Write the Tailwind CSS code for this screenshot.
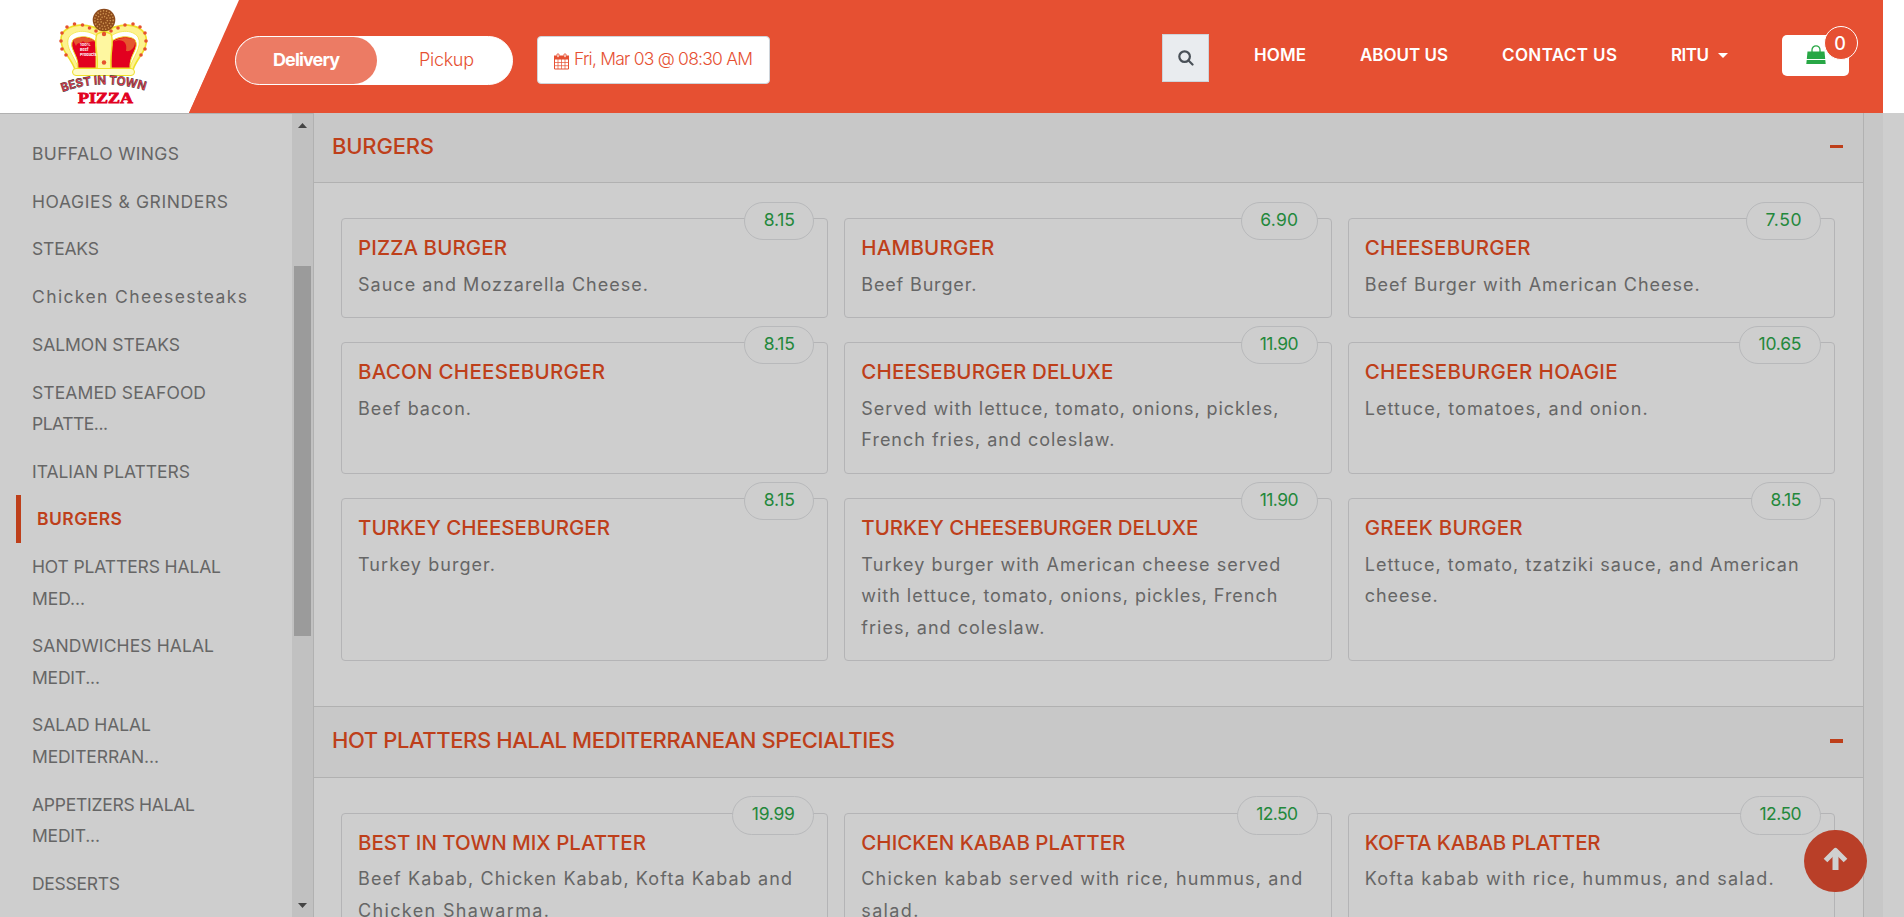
<!DOCTYPE html>
<html lang="en">
<head>
<meta charset="utf-8">
<title>Best In Town Pizza</title>
<script src="https://cdn.jsdelivr.net/npm/@tailwindcss/browser@4"></script>
</head>
<body class="h-[917px] w-[1904px] overflow-hidden bg-[#cecece] font-['Inter','Liberation_Sans',sans-serif] text-[#666]">
<header class="flex h-[113px] w-full bg-white">
  <div class="relative h-[113px] w-[189px] shrink-0">
    <svg class="absolute left-0 top-0" width="240" height="113" viewBox="0 0 240 113">
      <path d="M240 0L189 113H240Z" fill="#e65032"/>
      <g>
        <path d="M75 70C72 58 57 48 62 34C69 23 88 22 104 32C120 22 138 23 145 34C151 48 136 58 133 70Z" fill="#fdf28e" stroke="#efe02a" stroke-width="1.6"/>
        <path d="M78 68C76 58 64 47 69 37C75 29 90 30 98 37V68ZM130 68C132 58 143 47 138 37C132 29 118 30 110 37V68Z" fill="#fff" stroke="#f3e640" stroke-width=".8"/>
        <path d="M78 68C79 55 68 48 73 40C79 35 91 36 96 42V68ZM111 68V42C117 36 130 35 135 40C140 48 129 55 130 68Z" fill="#e2001f" stroke="#efe02a"/>
        <path d="M73 40C79 36 91 37 96 42C90 39 87 46 83 41C80 45 78 41 76 46ZM135 40C130 37 118 37 113 42C121 38 128 41 126 51C130 52 136 48 135 40Z" fill="#e5572f"/>
        <path d="M97 69C99 55 93 42 97 34Q104 30 111 34C115 42 109 55 111 69Z" fill="#fef7a0" stroke="#efe02a" stroke-width="1.4"/>
        <rect x="72.500" y="68.500" width="62" height="7" rx="3.500" fill="#fffbc8" stroke="#efe02a"/>
        <g fill="#e5512e"><circle cx="67" cy="27" r="1.800"/><circle cx="74.500" cy="24" r="1.800"/><circle cx="82.500" cy="25" r="1.800"/><circle cx="89.500" cy="28" r="1.800"/><circle cx="96" cy="31" r="1.800"/><circle cx="104" cy="34" r="2.200"/><circle cx="111" cy="31" r="1.800"/><circle cx="118" cy="28" r="1.800"/><circle cx="125" cy="25" r="1.800"/><circle cx="133" cy="24" r="1.800"/><circle cx="140" cy="27" r="1.800"/><circle cx="62" cy="33" r="1.800"/><circle cx="145" cy="33" r="1.800"/><circle cx="61" cy="41" r="1.800"/><circle cx="146" cy="41" r="1.800"/><circle cx="62" cy="49" r="1.800"/><circle cx="145" cy="49" r="1.800"/><circle cx="66" cy="55" r="1.800"/><circle cx="141" cy="55" r="1.800"/><circle cx="104" cy="62.500" r="2.200"/></g>
        <circle cx="104" cy="20" r="11.300" fill="#8c4a1c"/>
        <circle cx="104" cy="20" r="9.200" fill="none" stroke="#cf9450" stroke-width="1.500" stroke-dasharray="1.300 1.700"/>
        <circle cx="104" cy="20" r="6.400" fill="none" stroke="#cf9450" stroke-width="1.500" stroke-dasharray="1.300 1.500"/>
        <circle cx="104" cy="20" r="3.400" fill="none" stroke="#cf9450" stroke-width="1.500" stroke-dasharray="1.200 1.400"/>
        <g fill="#fff" font-family="Inter" font-weight="700" font-size="3.800"><text x="80" y="46">100%</text><text x="80" y="51">Beef</text><text x="80" y="55.500">Products</text></g>
        <path id="arc" d="M62.500 92Q104 77 146 91" fill="none"/>
        <text font-family="Inter" font-weight="700" font-size="12" fill="#e8384a" stroke="#333" stroke-width=".5"><textPath href="#arc" textLength="84" lengthAdjust="spacingAndGlyphs">BEST IN TOWN</textPath></text>
        <text x="78" y="102.500" textLength="55" lengthAdjust="spacingAndGlyphs" font-family="Liberation Serif" font-weight="700" font-size="15.500" fill="#e2001f" stroke="#e2001f" stroke-width=".8">PIZZA</text>
      </g>
    </svg>
  </div>
  <div class="flex w-[1694px] whitespace-nowrap bg-[#e65032] pl-[46px] [clip-path:polygon(50px_0,100%_0,100%_100%,0_100%)]">
    <div class="mt-9 flex h-[49px] w-[278px] shrink-0 rounded-full border border-white bg-white text-[18px]">
      <div class="flex w-[141px] items-center justify-center rounded-full bg-[#ec7b64] pb-0.5 font-bold text-white"><span data-w="66">Delivery</span></div>
      <div class="flex flex-1 items-center justify-center pb-0.5 pl-1 font-light text-[#e65032]"><span data-w="54">Pickup</span></div>
    </div>
    <div class="ml-6 mt-9 flex h-12 w-[233px] shrink-0 items-center rounded border border-[#ced4da] bg-white pl-4 text-[17.500px] font-light text-[#e65032]">
      <svg class="mr-[5px] mt-0.5 shrink-0" width="15" height="17" viewBox="0 0 15 17"><path d="M.5 3.500H14.500V16H.5Z" fill="#fff" stroke="#e65032"/><path d="M0 2.500H15V6.500H0Z" fill="#e65032"/><path d="M4 6V16M7.500 6V16M11 6V16M.5 9.500H14.500M.5 12.700H14.500" stroke="#e65032" stroke-width=".7"/><path d="M3 1H5V4.500H3ZM10 1H12V4.500H10Z" fill="#fff" stroke="#e65032" stroke-width=".8"/></svg>
      <span class="pb-0.5" data-w="178">Fri, Mar 03 @ 08:30 AM</span>
    </div>
    <div class="ml-[392px] mt-[34px] flex h-12 w-[47px] shrink-0 items-center justify-center border border-[#ced4da] bg-[#e9ecef]">
      <svg width="16" height="16" viewBox="0 0 16 16" fill="none" stroke="#495057" stroke-width="2.200"><circle cx="6.600" cy="6.600" r="5.300"/><path d="M10.500 10.500L14.500 14.500" stroke-linecap="round"/></svg>
    </div>
    <nav class="flex h-[111px] w-[573px] shrink-0 items-center pl-[45px] text-[17px] font-semibold text-white">
      <span class="w-[106px]"><span data-w="51">HOME</span></span>
      <span class="w-[142px]"><span data-w="87">ABOUT US</span></span>
      <span class="w-[169px]"><span data-w="114">CONTACT US</span></span>
      <span class="w-[47px]"><span data-w="37">RITU</span></span>
      <svg width="10" height="5"><path d="M0 0H10L5 5Z" fill="#fff"/></svg>
    </nav>
    <div class="relative mt-[35px] h-[41px] w-[67px] shrink-0 rounded-[5px] bg-white">
      <svg class="ml-6 mt-[10px]" width="20" height="19" viewBox="0 0 20 19"><path d="M1.500 6.500H18.500L19.200 14H.8Z M.7 15H19.300L19.700 19H.3Z" fill="#28a745"/><path d="M6 8.500V5A4 4.200 0 0 1 14 5V8.500" fill="none" stroke="#28a745" stroke-width="1.300"/></svg>
      <div class="absolute -top-[9px] left-[42px] flex size-[34px] items-center justify-center rounded-full border border-white bg-[#e65032] pr-0.5 text-[18px] font-medium text-white">0</div>
    </div>
  </div>
</header>
<div class="flex h-[804px]">
  <aside class="flex w-[314px] shrink-0 overflow-hidden border-r border-t border-[#b1b1b1]">
    <ul id="menu" class="w-[292px] pt-4 text-[17.500px] leading-[31.500px]"></ul>
    <div class="flex w-[21px] flex-col items-center bg-[#c1c1c1]">
      <svg class="mt-[9px]" width="9" height="5"><path d="M0 5L4.500 0L9 5Z" fill="#444"/></svg>
      <div class="mt-[138px] h-[370px] w-[17px] bg-[#9b9b9b]"></div>
      <svg class="mt-[267px]" width="9" height="5"><path d="M0 0L4.500 5L9 0Z" fill="#444"/></svg>
    </div>
  </aside>
  <main id="sections" class="h-[804px] w-[1550px] overflow-hidden border-r border-[#b1b1b1]"></main>
  <div class="w-[19px] bg-[#c7c7c7]"></div>
</div>
<button class="absolute left-[1804px] top-[830px] flex h-[62px] w-[63px] items-center justify-center rounded-full bg-[#b93f28]">
  <svg class="-mt-[5px]" width="25" height="24" viewBox="0 0 25 24" fill="none" stroke="#d0d0d0"><path d="M12.500 23V5" stroke-width="6"/><path d="M2.500 13.500L12.500 3.500L22.500 13.500" stroke-width="5.200" stroke-linejoin="round"/></svg>
</button>
<script>
const menu = [
  [['BUFFALO WINGS',146]], [['HOAGIES & GRINDERS',195]], [['STEAKS',66]], [['Chicken Cheesesteaks',214]], [['SALMON STEAKS',147]],
  [['STEAMED SEAFOOD',173],['PLATTE...',75]], [['ITALIAN PLATTERS',157]], [['BURGERS',84]], [['HOT PLATTERS HALAL',188],['MED...',52]],
  [['SANDWICHES HALAL',181],['MEDIT...',67]], [['SALAD HALAL',118],['MEDITERRAN...',126]], [['APPETIZERS HALAL',162],['MEDIT...',67]], [['DESSERTS',87]]
];
const sections = [
  {title:['BURGERS',101], items:[
    ['PIZZA BURGER',148,'8.15',30,70,[['Sauce and Mozzarella Cheese.',289]]],
    ['HAMBURGER',132,'6.90',37,77,[['Beef Burger.',114]]],
    ['CHEESEBURGER',165,'7.50',35,75,[['Beef Burger with American Cheese.',334]]],
    ['BACON CHEESEBURGER',246,'8.15',30,70,[['Beef bacon.',112]]],
    ['CHEESEBURGER DELUXE',251,'11.90',38,77,[['Served with lettuce, tomato, onions, pickles,',416],['French fries, and coleslaw.',252]]],
    ['CHEESEBURGER HOAGIE',252,'10.65',42,82,[['Lettuce, tomatoes, and onion.',282]]],
    ['TURKEY CHEESEBURGER',251,'8.15',30,70,[['Turkey burger.',136]]],
    ['TURKEY CHEESEBURGER DELUXE',336,'11.90',38,77,[['Turkey burger with American cheese served',418],['with lettuce, tomato, onions, pickles, French',415],['fries, and coleslaw.',182]]],
    ['GREEK BURGER',157,'8.15',30,70,[['Lettuce, tomato, tzatziki sauce, and American',433],['cheese.',72]]]
  ]},
  {title:['HOT PLATTERS HALAL MEDITERRANEAN SPECIALTIES',562], items:[
    ['BEST IN TOWN MIX PLATTER',287,'19.99',42,82,[['Beef Kabab, Chicken Kabab, Kofta Kabab and',433],['Chicken Shawarma.',190]]],
    ['CHICKEN KABAB PLATTER',263,'12.50',41,81,[['Chicken kabab served with rice, hummus, and',440],['salad.',56]]],
    ['KOFTA KABAB PLATTER',235,'12.50',41,81,[['Kofta kabab with rice, hummus, and salad.',408]]]
  ]}
];
const t = ([s, w]) => `<span class="whitespace-nowrap" data-w="${w}">${s.replace('&','&amp;')}</span>`;
const lines = a => a.map(l => `<div>${t(l)}</div>`).join('');
document.getElementById('menu').innerHTML = menu.map(a => a[0][0] === 'BURGERS'
  ? `<li class="ml-4 border-l-[5px] border-[#be3f1a] py-[8.100px] pl-[16px] font-semibold text-[#be3f1a]">${lines(a)}</li>`
  : `<li class="py-[8.100px] pl-8">${lines(a)}</li>`).join('');
document.getElementById('sections').innerHTML = sections.map((s, i) => `
  <section>
    <div class="flex items-center justify-between border-b border-[#b1b1b1] bg-[#c8c8c8] pl-[18px] pr-[20px] text-[22px] font-medium text-[#be3f1a] ${i ? 'h-[72px] border-t pb-0.5' : 'h-[70px] pb-0.5'}">
      <span class="-mt-px">${t(s.title)}</span><span class="h-[3.500px] w-[13px] bg-[#be3f1a]"></span>
    </div>
    <div class="grid grid-cols-3 gap-x-4 gap-y-6 pb-[44.500px] pl-[27px] pr-[28px] pt-[35px]">${s.items.map(([n, nw, p, pw, bw, d]) => `
      <article class="relative rounded border border-[#b4b4b6] pb-[17.250px] pl-4 pt-[13px]">
        <div class="absolute -top-[17.500px] right-[13px] flex h-[38.500px] items-center justify-center rounded-full border border-[#b8b9bb] bg-[#cecece] pb-0.5 text-[17.500px] text-[#23883b]" style="width:${bw}px">${t([p, pw])}</div>
        <h3 class="h-[36.500px] text-[20.500px] font-medium leading-[31px] text-[#be3f1a]">${t([n, nw])}</h3>
        <div class="text-[18px] leading-[31.500px]">${lines(d)}</div>
      </article>`).join('')}
    </div>
  </section>`).join('');
// Spread each label's letters so that it fills its measured width.
function fit() {
  const labels = [...document.querySelectorAll('[data-w]')];
  labels.forEach(e => { e.style.letterSpacing = '0px'; e.style.marginRight = '0px'; });
  const gaps = labels.map(e => (e.dataset.w - e.getBoundingClientRect().width + 1) / (e.textContent.length - 1));
  labels.forEach((e, i) => {
    e.style.letterSpacing = gaps[i] + 'px';
    e.style.marginRight = -gaps[i] + 'px';
  });
}
fit();
window.addEventListener('load', fit);
document.fonts.ready.then(fit);
new ResizeObserver(fit).observe(document.body);
</script>
</body>
</html>
